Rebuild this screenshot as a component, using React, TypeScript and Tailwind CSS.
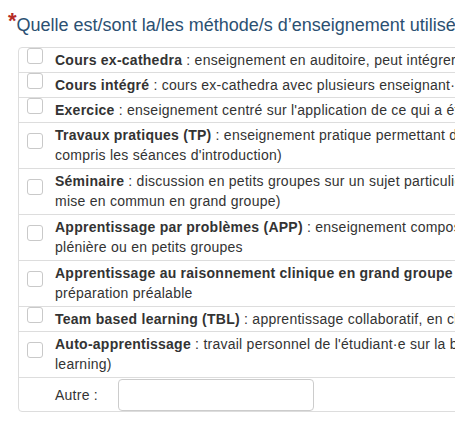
import React from "react";

type Option = {
  label: string;
  lines: string[];
};

const options: Option[] = [
  {
    label: "Cours ex-cathedra",
    lines: [" : enseignement en auditoire, peut intégrer des outils interactifs"],
  },
  {
    label: "Cours intégré",
    lines: [" : cours ex-cathedra avec plusieurs enseignant·es de disciplines différentes"],
  },
  {
    label: "Exercice",
    lines: [" : enseignement centré sur l'application de ce qui a été vu en cours"],
  },
  {
    label: "Travaux pratiques (TP)",
    lines: [
      " : enseignement pratique permettant de mettre en œuvre des connaissances (y",
      "compris les séances d'introduction)",
    ],
  },
  {
    label: "Séminaire",
    lines: [
      " : discussion en petits groupes sur un sujet particulier (avec éventuelle",
      "mise en commun en grand groupe)",
    ],
  },
  {
    label: "Apprentissage par problèmes (APP)",
    lines: [
      " : enseignement composé de séances en",
      "plénière ou en petits groupes",
    ],
  },
  {
    label: "Apprentissage au raisonnement clinique en grand groupe",
    lines: [" (ARC) : avec", "préparation préalable"],
  },
  {
    label: "Team based learning (TBL)",
    lines: [" : apprentissage collaboratif, en classe entière"],
  },
  {
    label: "Auto-apprentissage",
    lines: [
      " : travail personnel de l'étudiant·e sur la base de ressources (e-",
      "learning)",
    ],
  },
];

function Checkbox() {
  return (
    <span className="block w-[16px] h-[16px] ml-[8px] -mt-[8px] border border-[#c9c9c9] rounded-[3px] bg-white" />
  );
}

export default function App() {
  return (
    <div className="w-[455px] h-[421px] overflow-hidden bg-white font-['Liberation_Sans',Arial,sans-serif]">
      {/* Question title */}
      <h3 className="h-[20px] mt-[15px] pl-[8px] text-[18px] leading-[20px] text-[#2b5072] whitespace-nowrap">
        <span className="text-[#b52b27] font-bold text-[22px] leading-[0px] align-[3px]">*</span>
        Quelle est/sont la/les méthode/s d’enseignement utilisé·es ?
      </h3>

      {/* Options table */}
      <div className="mt-[12px] ml-[18px] w-[720px] border border-[#dddddd] rounded-[4px] text-[14px] leading-[20px] tracking-[0.25px] text-[#333333]">
        {options.map((opt, i) => (
          <div
            key={opt.label}
            className={`flex items-center pt-[2px] ${opt.lines.length > 1 ? "pb-[3px]" : "pb-[2px]"} ${i > 0 ? "border-t border-[#dddddd]" : ""}`}
          >
            <div className="w-[36px] shrink-0 flex items-center">
              <Checkbox />
            </div>
            <div className="whitespace-nowrap">
              <b>{opt.label}</b>
              {opt.lines[0]}
              {opt.lines.slice(1).map((l) => (
                <React.Fragment key={l}>
                  <br />
                  {l}
                </React.Fragment>
              ))}
            </div>
          </div>
        ))}
        <div className="flex items-center border-t border-[#dddddd] h-[34px]">
          <div className="w-[36px] shrink-0" />
          <span className="w-[63px] shrink-0">Autre :</span>
          <input
            type="text"
            className="w-[196px] h-[32px] border border-[#cccccc] rounded-[4px] px-[6px] outline-none"
          />
        </div>
      </div>
    </div>
  );
}
